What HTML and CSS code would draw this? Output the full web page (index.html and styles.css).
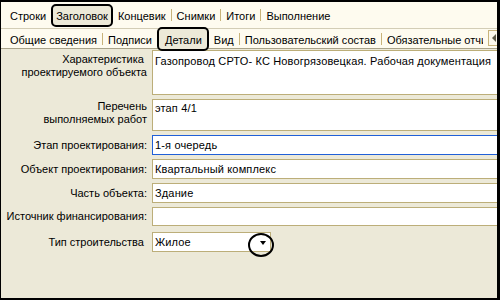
FILE: index.html
```html
<!DOCTYPE html>
<html lang="ru">
<head>
<meta charset="utf-8">
<title>Детали</title>
<link rel="stylesheet" href="styles.css">
</head>
<body>
<div class="window">
  <div class="tabbar tabbar-main">
    <div class="tab">Строки</div>
    <div class="tab tab-active">Заголовок</div>
    <div class="tab">Концевик</div><span class="sep"></span>
    <div class="tab">Снимки</div><span class="sep"></span>
    <div class="tab">Итоги</div><span class="sep"></span>
    <div class="tab">Выполнение</div>
  </div>
  <div class="tabbar tabbar-sub">
    <div class="tab">Общие сведения</div><span class="sep"></span>
    <div class="tab">Подписи</div>
    <div class="tab tab-active">Детали</div>
    <div class="tab">Вид</div><span class="sep"></span>
    <div class="tab">Пользовательский состав</div><span class="sep"></span>
    <div class="tab tab-last">Обязательные отчисления</div>
    <div class="scroll-btn"><span class="arrow-left"></span></div>
  </div>
  <div class="form">
    <div class="label label-top label-a">Характеристика&nbsp;<br>проектируемого объекта</div>
    <div class="field field-multi field-a">Газопровод СРТО- КС Новогрязовецкая. Рабочая документация</div>

    <div class="label label-top label-b">Перечень<br>выполняемых работ</div>
    <div class="field field-multi field-b">этап 4/1</div>

    <div class="label">Этап проектирования:</div>
    <div class="field field-focus">1-я очередь</div>

    <div class="label">Объект проектирования:</div>
    <div class="field">Квартальный комплекс</div>

    <div class="label">Часть объекта:</div>
    <div class="field">Здание</div>

    <div class="label">Источник финансирования:</div>
    <div class="field"></div>

    <div class="label label-g">Тип строительства&nbsp;</div>
    <div class="select">
      <span class="select-value">Жилое</span>
      <span class="caret"></span>
      <span class="annot-circle"></span>
    </div>
  </div>
</div>
</body>
</html>
```
FILE: styles.css
```css
body {
  margin: 0;
  background: #000;
  font-family: "Liberation Sans", Arial, sans-serif;
  font-size: 11px;
  color: #000;
}

.window {
  margin: 2px 3px 2px 1px;
  height: 296px;
  background: #ECE9D8;
  overflow: hidden;
  display: flex;
  flex-direction: column;
}

.tabbar {
  display: flex;
  align-items: center;
  background: #FEFBEF;
  box-sizing: border-box;
  flex: none;
  padding-left: 4px;
}

.tabbar-main {
  height: 27px;
  border-bottom: 1px solid #D3CDB6;
}

.tabbar-sub {
  height: 20px;
  padding-top: 1px;
  border-bottom: 1px solid #A9A38A;
}

.tab {
  display: flex;
  align-items: center;
  padding: 2px 5px 0;
  line-height: 13px;
  white-space: nowrap;
  flex: none;
}

.tab-active {
  box-sizing: border-box;
  padding: 2px 3px 0;
  border: 2px solid #000;
  border-radius: 5px;
  background: #ECE9D8;
  position: relative;
  z-index: 1;
}

.tabbar-main .tab-active {
  height: 23px;
}

.tabbar-sub .tab-active {
  height: 24px;
  padding: 2px 5px 0 6px;
}

.sep {
  width: 1px;
  height: 12px;
  background: #C8B37A;
  flex: none;
}

.tab-last {
  flex: 1 1 auto;
  min-width: 0;
  overflow: hidden;
  padding-right: 0;
  margin-right: 5px;
}

.scroll-btn {
  flex: none;
  box-sizing: border-box;
  width: 9px;
  height: 16px;
  margin-top: -3px;
  border: 1px solid #C8B37A;
  border-right: none;
  background: #FBF8EC;
  display: flex;
  align-items: center;
  padding-left: 3px;
}

.arrow-left {
  width: 0;
  height: 0;
  border-top: 4px solid transparent;
  border-bottom: 4px solid transparent;
  border-right: 4px solid #5E5A48;
}

.form {
  display: grid;
  grid-template-columns: 141px 1fr;
  grid-template-rows: 45px 32px 20px 20px 20px 19px 22px;
  row-gap: 4px;
  column-gap: 5px;
  padding: 1px 0 0 5px;
}

.label {
  text-align: right;
  line-height: 13px;
  align-self: center;
  white-space: nowrap;
}

.label-top {
  align-self: start;
}

.label-a {
  padding-top: 3px;
}

.label-b {
  padding-top: 1px;
}

.label-g {
  margin-top: 2px;
}

.field {
  box-sizing: border-box;
  background: #fff;
  border: 1px solid #BCAE79;
  width: calc(100% + 20px);
  padding: 0 2px;
  line-height: 13px;
  letter-spacing: 0.15px;
  white-space: nowrap;
  overflow: hidden;
  display: flex;
  align-items: center;
}

.field-multi {
  align-items: flex-start;
}

.field-a {
  padding-top: 4px;
}

.field-b {
  padding-top: 2px;
}

.field-focus {
  border-color: #2160D8;
}

.select {
  box-sizing: border-box;
  margin-top: 2px;
  height: 20px;
  width: 119px;
  background: #fff;
  border: 1px solid #BCAE79;
  padding: 0 2px;
  line-height: 13px;
  letter-spacing: 0.15px;
  display: flex;
  align-items: center;
  position: relative;
}

.select-value {
  flex: 1;
}

.caret {
  width: 0;
  height: 0;
  border-left: 3.5px solid transparent;
  border-right: 3.5px solid transparent;
  border-top: 4px solid #000;
  margin-right: 2px;
  margin-top: 1px;
}

.annot-circle {
  position: absolute;
  left: 95px;
  top: 0;
  width: 26px;
  height: 24px;
  box-sizing: border-box;
  border: 2px solid #000;
  border-radius: 50%;
}
```
